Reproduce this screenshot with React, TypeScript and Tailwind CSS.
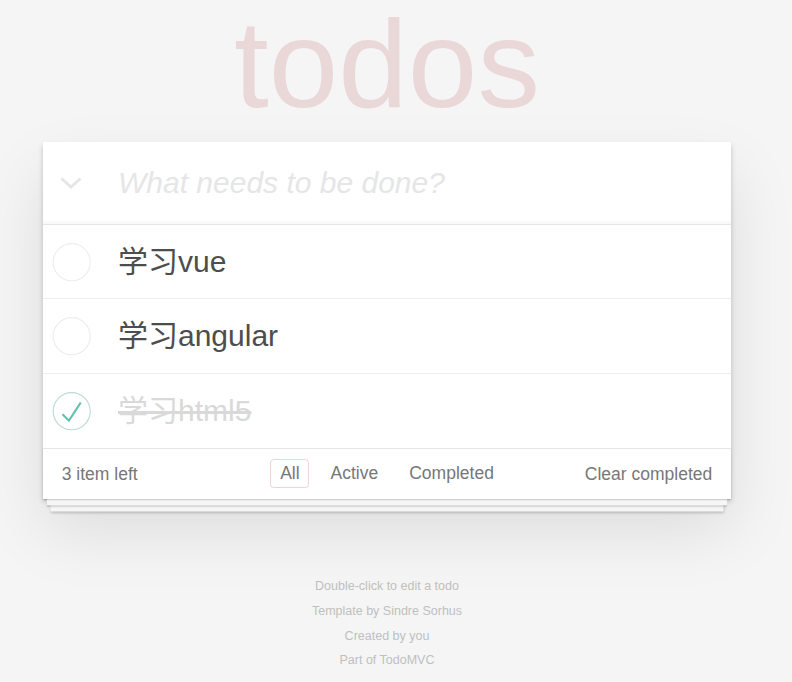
import { useState } from "react";

type Todo = { id: number; title: string; done: boolean };

const initialTodos: Todo[] = [
  { id: 1, title: "学习vue", done: false },
  { id: 2, title: "学习angular", done: false },
  { id: 3, title: "学习html5", done: true },
];

const font = "font-['Liberation_Sans','Noto_Sans_CJK_SC',Arial,sans-serif]";

function Toggle({ done }: { done: boolean }) {
  return (
    <svg width="50" height="50" viewBox="-10 -18 100 135" className="shrink-0">
      <circle
        cx="50"
        cy="50"
        r="50"
        fill="none"
        stroke={done ? "#bddad5" : "#ededed"}
        strokeWidth="3"
      />
      {done && <path fill="#5dc2af" d="M72 25L42 71 27 56l-4 4 20 20 34-52z" />}
    </svg>
  );
}

export default function App() {
  const [todos, setTodos] = useState<Todo[]>(initialTodos);
  const [filter, setFilter] = useState("All");

  const toggle = (id: number) => {
    setTodos(todos.map((t) => (t.id === id ? { ...t, done: !t.done } : t)));
  };

  const left = todos.length;

  return (
    <div className={`min-h-screen bg-[#f5f5f5] ${font} pt-[1px]`}>
      <div className="w-[774px]">
        <div className="mx-auto w-[688px]">
          <h1 className="-mt-[7px] mb-[8px] text-center text-[125px] leading-[140px] font-thin text-[rgba(175,47,47,0.15)]">
            todos
          </h1>

          <section className="bg-white shadow-[0_2.5px_5px_0_rgba(0,0,0,0.2),0_31px_62px_0_rgba(0,0,0,0.1)]">
            {/* new todo */}
            <div className="flex items-center h-[82px] shadow-[inset_0_-2.5px_1.25px_rgba(0,0,0,0.03)]">
              <div className="w-[75px] shrink-0">
                <svg width="22" height="12" viewBox="0 0 22 12" className="ml-[17px]">
                  <polyline
                    points="1.5,1.5 11,10 20.5,1.5"
                    fill="none"
                    stroke="#e6e6e6"
                    strokeWidth="3"
                  />
                </svg>
              </div>
              <input
                className="flex-1 pr-[20px] text-[30px] leading-[42px] italic font-light text-[#4d4d4d] placeholder:text-[#e6e6e6] outline-none bg-transparent"
                placeholder="What needs to be done?"
              />
            </div>

            {/* list */}
            <ul className="border-t border-[#e6e6e6]">
              {todos.map((t, i) => (
                <li
                  key={t.id}
                  onClick={() => toggle(t.id)}
                  className={`flex items-center h-[74.33px] ${
                    i < todos.length - 1 ? "border-b border-[#ededed]" : ""
                  }`}
                >
                  <div className="w-[75px] shrink-0">
                    <Toggle done={t.done} />
                  </div>
                  <span
                    className={`text-[30px] leading-[36px] ${
                      t.done ? "text-[#d9d9d9] line-through" : "text-[#4d4d4d]"
                    }`}
                  >
                    {t.title}
                  </span>
                </li>
              ))}
            </ul>

            {/* footer */}
            <footer className="grid grid-cols-[1fr_auto_1fr] items-center h-[51px] px-[18.75px] border-t border-[#e6e6e6] text-[17.5px] text-[#777] shadow-[0_1.25px_1.25px_rgba(0,0,0,0.2),0_10px_0_-3.75px_#f6f6f6,0_11.25px_1.25px_-3.75px_rgba(0,0,0,0.2),0_20px_0_-7.5px_#f6f6f6,0_21.25px_2.5px_-7.5px_rgba(0,0,0,0.2)]">
              <span className="justify-self-start">{left} item left</span>
              <ul className="flex gap-[4px]">
                {["All", "Active", "Completed"].map((f) => (
                  <li key={f}>
                    <a
                      onClick={() => setFilter(f)}
                      className={`block mx-[3.75px] px-[8.75px] py-[3.75px] leading-[19.5px] rounded-[3.75px] border cursor-pointer ${
                        filter === f
                          ? "border-[rgba(175,47,47,0.2)]"
                          : "border-transparent"
                      }`}
                    >
                      {f}
                    </a>
                  </li>
                ))}
              </ul>
              <button className="justify-self-end text-[#777]">Clear completed</button>
            </footer>
          </section>

          <div className="mt-[81px] flex flex-col items-center gap-[12.3px] text-[12.5px] leading-none text-[#bfbfbf]">
            <p>Double-click to edit a todo</p>
            <p>Template by Sindre Sorhus</p>
            <p>Created by you</p>
            <p>Part of TodoMVC</p>
          </div>
        </div>
      </div>
    </div>
  );
}
